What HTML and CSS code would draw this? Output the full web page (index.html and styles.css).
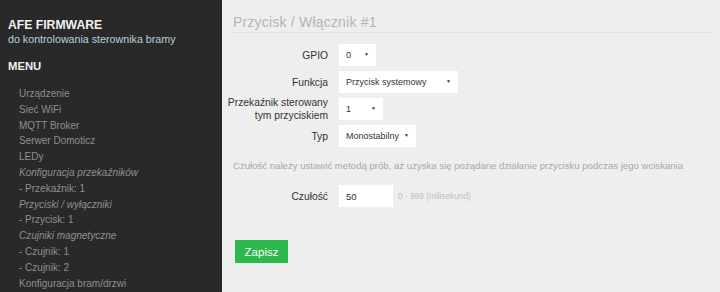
FILE: index.html
```html
<!DOCTYPE html>
<html lang="pl">
<head>
    <meta charset="UTF-8">
    <title>AFE Firmware</title>
    <link rel="stylesheet" href="styles.css">
</head>
<body>
    <div class="layout">
        <!-- Menu boczne -->
        <div class="sidebar">
            <h1>AFE FIRMWARE</h1>
            <p class="sub">do kontrolowania sterownika bramy</p>
            <h2>MENU</h2>
            <ul class="menu">
                <li>Urządzenie</li>
                <li>Sieć WiFi</li>
                <li>MQTT Broker</li>
                <li>Serwer Domoticz</li>
                <li>LEDy</li>
                <li class="grupa">Konfiguracja przekaźników</li>
                <li>- Przekaźnik: 1</li>
                <li class="grupa">Przyciski / wyłączniki</li>
                <li>- Przycisk: 1</li>
                <li class="grupa">Czujniki magnetyczne</li>
                <li>- Czujnik: 1</li>
                <li>- Czujnik: 2</li>
                <li>Konfiguracja bram/drzwi</li>
            </ul>
        </div>

        <!-- Formularz -->
        <div class="content">
            <h3 class="naglowek">Przycisk / Włącznik #1</h3>
            <div class="pole">
                <label>GPIO</label>
                <span class="wybor w-gpio"><select><option>0</option></select></span>
            </div>
            <div class="pole">
                <label>Funkcja</label>
                <span class="wybor w-funkcja"><select><option>Przycisk systemowy</option></select></span>
            </div>
            <div class="pole">
                <label>Przekaźnik sterowany<br>tym przyciskiem</label>
                <span class="wybor w-przekaznik"><select><option>1</option></select></span>
            </div>
            <div class="pole">
                <label>Typ</label>
                <span class="wybor w-typ"><select><option>Monostabilny</option></select></span>
            </div>
            <p class="opis">Czułość należy ustawić metodą prób, aż uzyska się pożądane działanie przycisku podczas jego wciskania</p>
            <div class="pole">
                <label>Czułość</label>
                <input type="text" class="liczba" value="50">
                <span class="zakres">0 - 999 (milisekund)</span>
            </div>
            <button class="zapisz">Zapisz</button>
        </div>
    </div>
</body>
</html>
```

FILE: styles.css
```css
body {
    margin: 0;
    font-family: "Liberation Sans", Arial, sans-serif;
    background: #eeeeee;
    color: #333;
}
.layout {
    display: flex;
    min-height: 292px;
}
.sidebar {
    width: 222px;
    flex-shrink: 0;
    background: #292929;
    padding: 18px 0 0 8px;
    box-sizing: border-box;
}
.sidebar h1 {
    margin: 0;
    font-size: 12.2px;
    color: #f2f2f2;
    line-height: 14px;
}
.sidebar .sub {
    margin: 0;
    font-size: 10.7px;
    color: #b9cfdc;
    line-height: 14px;
}
.sidebar h2 {
    margin: 13px 0 0;
    font-size: 11.3px;
    color: #f0f0f0;
    line-height: 14px;
}
.menu {
    list-style: none;
    margin: 13px 0 0;
    padding: 0 0 0 11px;
    font-size: 10px;
    line-height: 15.8px;
    color: #8f8f8f;
}
.menu .grupa {
    font-style: italic;
}
.content {
    flex: 1;
    padding: 12px 8px 0 11px;
}
.naglowek {
    margin: 0 0 11px;
    font-weight: normal;
    font-size: 14px;
    letter-spacing: 0.2px;
    color: #b5b5b5;
    line-height: 20px;
    border-bottom: 1px solid #e2e2e2;
}
.pole {
    display: flex;
    align-items: center;
    height: 22px;
    margin-bottom: 5px;
    font-size: 10.3px;
}
.pole label {
    flex: 0 0 110px;
    margin-left: -15px;
    margin-right: 11px;
    text-align: right;
    white-space: nowrap;
    line-height: 13px;
}
.wybor {
    position: relative;
    display: inline-block;
    background: #fff;
    height: 22px;
}
.wybor select {
    appearance: none;
    -webkit-appearance: none;
    border: none;
    background: transparent;
    font-family: inherit;
    font-size: 9px;
    color: #333;
    height: 22px;
    width: 100%;
    padding: 0 0 0 7px;
    outline: none;
}
.wybor::after {
    content: "▼";
    position: absolute;
    right: 7px;
    top: 7px;
    font-size: 5px;
    color: #333;
}
.w-gpio { width: 37px; }
.w-funkcja { width: 119px; }
.w-przekaznik { width: 44px; }
.w-typ { width: 77px; }
.opis {
    margin: 13px 0 13px;
    font-size: 9.6px;
    line-height: 12px;
    color: #a8a8a8;
}
.liczba {
    width: 54px;
    height: 22px;
    box-sizing: border-box;
    border: none;
    padding: 0 7px;
    font-family: inherit;
    font-size: 9.5px;
    color: #333;
    outline: none;
}
.zakres {
    margin-left: 5px;
    font-size: 8.3px;
    color: #bdbdbd;
}
.zapisz {
    margin: 28px 0 0 2px;
    background: #2db84d;
    color: #fff;
    border: none;
    font-family: inherit;
    font-size: 11.5px;
    width: 53px;
    height: 23px;
    padding: 0;
}
```
